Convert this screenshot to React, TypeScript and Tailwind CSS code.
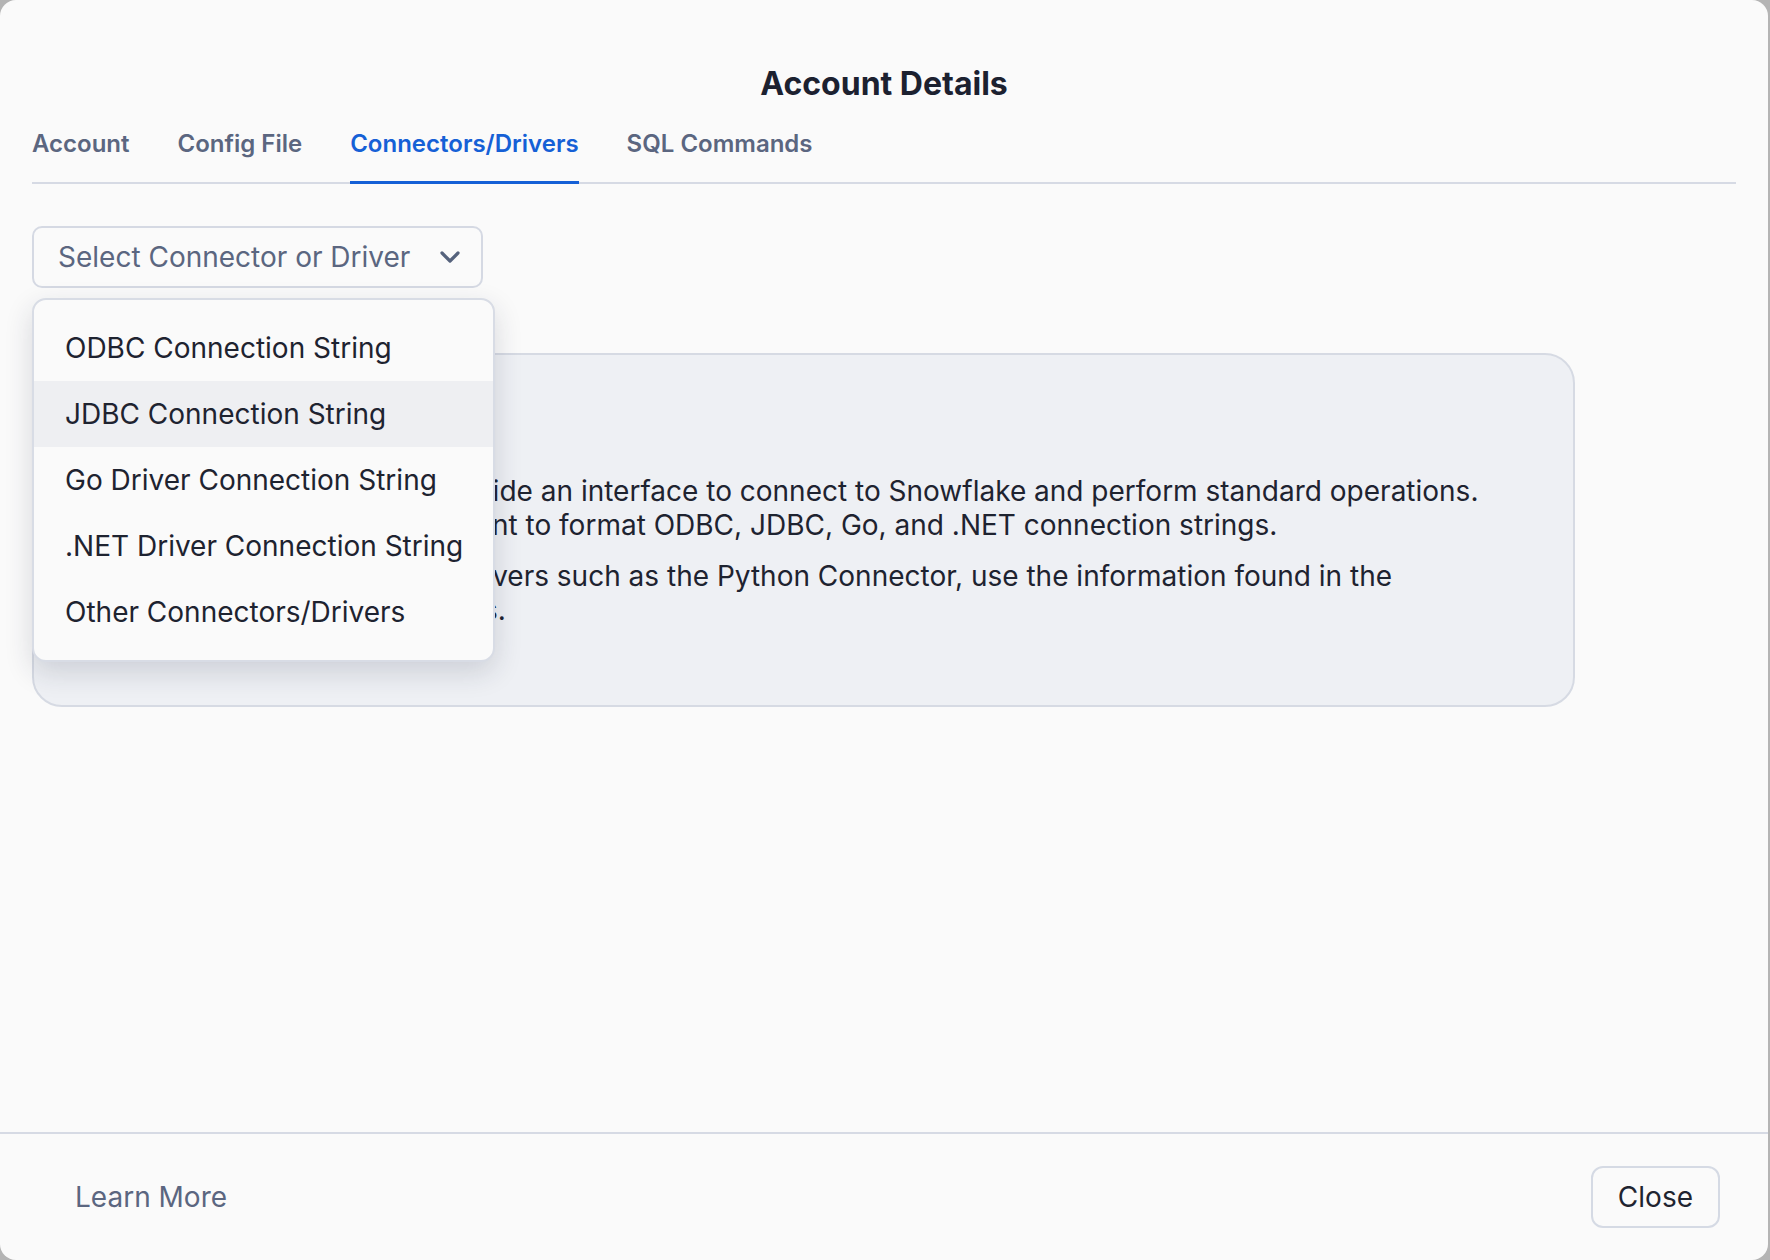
import React from "react";

const items = [
  "ODBC Connection String",
  "JDBC Connection String",
  "Go Driver Connection String",
  ".NET Driver Connection String",
  "Other Connectors/Drivers",
];

const tabs = ["Account", "Config File", "Connectors/Drivers", "SQL Commands"];

export default function App() {
  return (
    <div className="w-[1770px] h-[1260px] bg-[#b4b4b4] overflow-hidden font-['Inter',sans-serif]">
      <div className="w-[1768px] h-[1260px] bg-[#fafafa] rounded-2xl flex flex-col">
        <div className="flex-1 px-8">
          <h1 className="mt-[63px] text-center text-[32px] leading-[41px] font-bold text-[#1c2130]">
            Account Details
          </h1>
          <div className="mt-[24px] flex gap-12 border-b-2 border-[#d6dae4]">
            {tabs.map((t) => {
              const active = t === "Connectors/Drivers";
              return (
                <button
                  key={t}
                  className={
                    active
                      ? "text-[24px] leading-[32px] font-semibold text-[#1560d6] pb-[21px] -mb-[2px] border-b-[3px] border-[#1560d6]"
                      : "text-[24px] leading-[32px] font-semibold text-[#5b6680] pb-[19px] border-b-[3px] border-transparent"
                  }
                >
                  {t}
                </button>
              );
            })}
          </div>

          <div className="relative mt-[42px] w-[451px] h-[62px]">
            <div className="w-full h-full border-2 border-[#d5d9e3] rounded-[10px] flex items-center justify-between pl-[24px] pr-[21px] bg-[#fafafa]">
              <span className="text-[28px] text-[#5b6680]">Select Connector or Driver</span>
              <svg width="20" height="12" viewBox="0 0 20 12" fill="none">
                <path d="M2 2 L10 10 L18 2" stroke="#55627c" strokeWidth="3.2" strokeLinecap="round" strokeLinejoin="round" />
              </svg>
            </div>
            <div className="absolute top-[72px] left-0 w-[463px] z-10 bg-[#fafafa] border-2 border-[#d8dce5] rounded-[14px] py-[15px] shadow-[0_10px_28px_rgba(30,40,60,0.16)]">
              {items.map((it, i) => (
                <div
                  key={it}
                  className={
                    "h-[66px] flex items-center pl-[31px] text-[28px] text-[#1e2330] " +
                    (i === 1 ? "bg-[#eeeff2]" : "")
                  }
                >
                  {it}
                </div>
              ))}
            </div>
          </div>

          <div className="mt-[65px] w-[1543px] h-[354px] bg-[#eef0f4] border-2 border-[#d6dae3] rounded-[30px] pl-[32px] pr-[32px] pt-[32px] text-[#1e2330] flex gap-[21px]">
            <svg className="mt-[6px] shrink-0" width="28" height="28" viewBox="0 0 24 24" fill="none">
              <circle cx="12" cy="12" r="10" stroke="#1560d6" strokeWidth="2" />
              <path d="M12 11v6M12 7.5v.5" stroke="#1560d6" strokeWidth="2" strokeLinecap="round" />
            </svg>
            <div>
              <div className="text-[28px] leading-[40px] font-semibold">Connectors/Drivers</div>
              <p className="mt-[47px] text-[28px] leading-[34px]">
                Connectors and drivers provide an interface to connect to Snowflake and perform standard operations.
                <br />
                Use this dropdown if you want to format ODBC, JDBC, Go, and .NET connection strings.
              </p>
              <p className="mt-[17px] text-[28px] leading-[34px]">
                For other connectors and drivers such as the Python Connector, use the information found in the
                <br />
                Account and Config File tabs.
              </p>
            </div>
          </div>
        </div>

        <div className="border-t-2 border-[#d6dae4] px-12 py-8 flex items-center justify-between">
          <button className="h-[62px] px-[27px] text-[28px] text-[#5b6680]">Learn More</button>
          <button className="h-[62px] px-[25px] border-2 border-[#d5dae4] rounded-[12px] text-[28px] text-[#1f2430]">
            Close
          </button>
        </div>
      </div>
    </div>
  );
}
